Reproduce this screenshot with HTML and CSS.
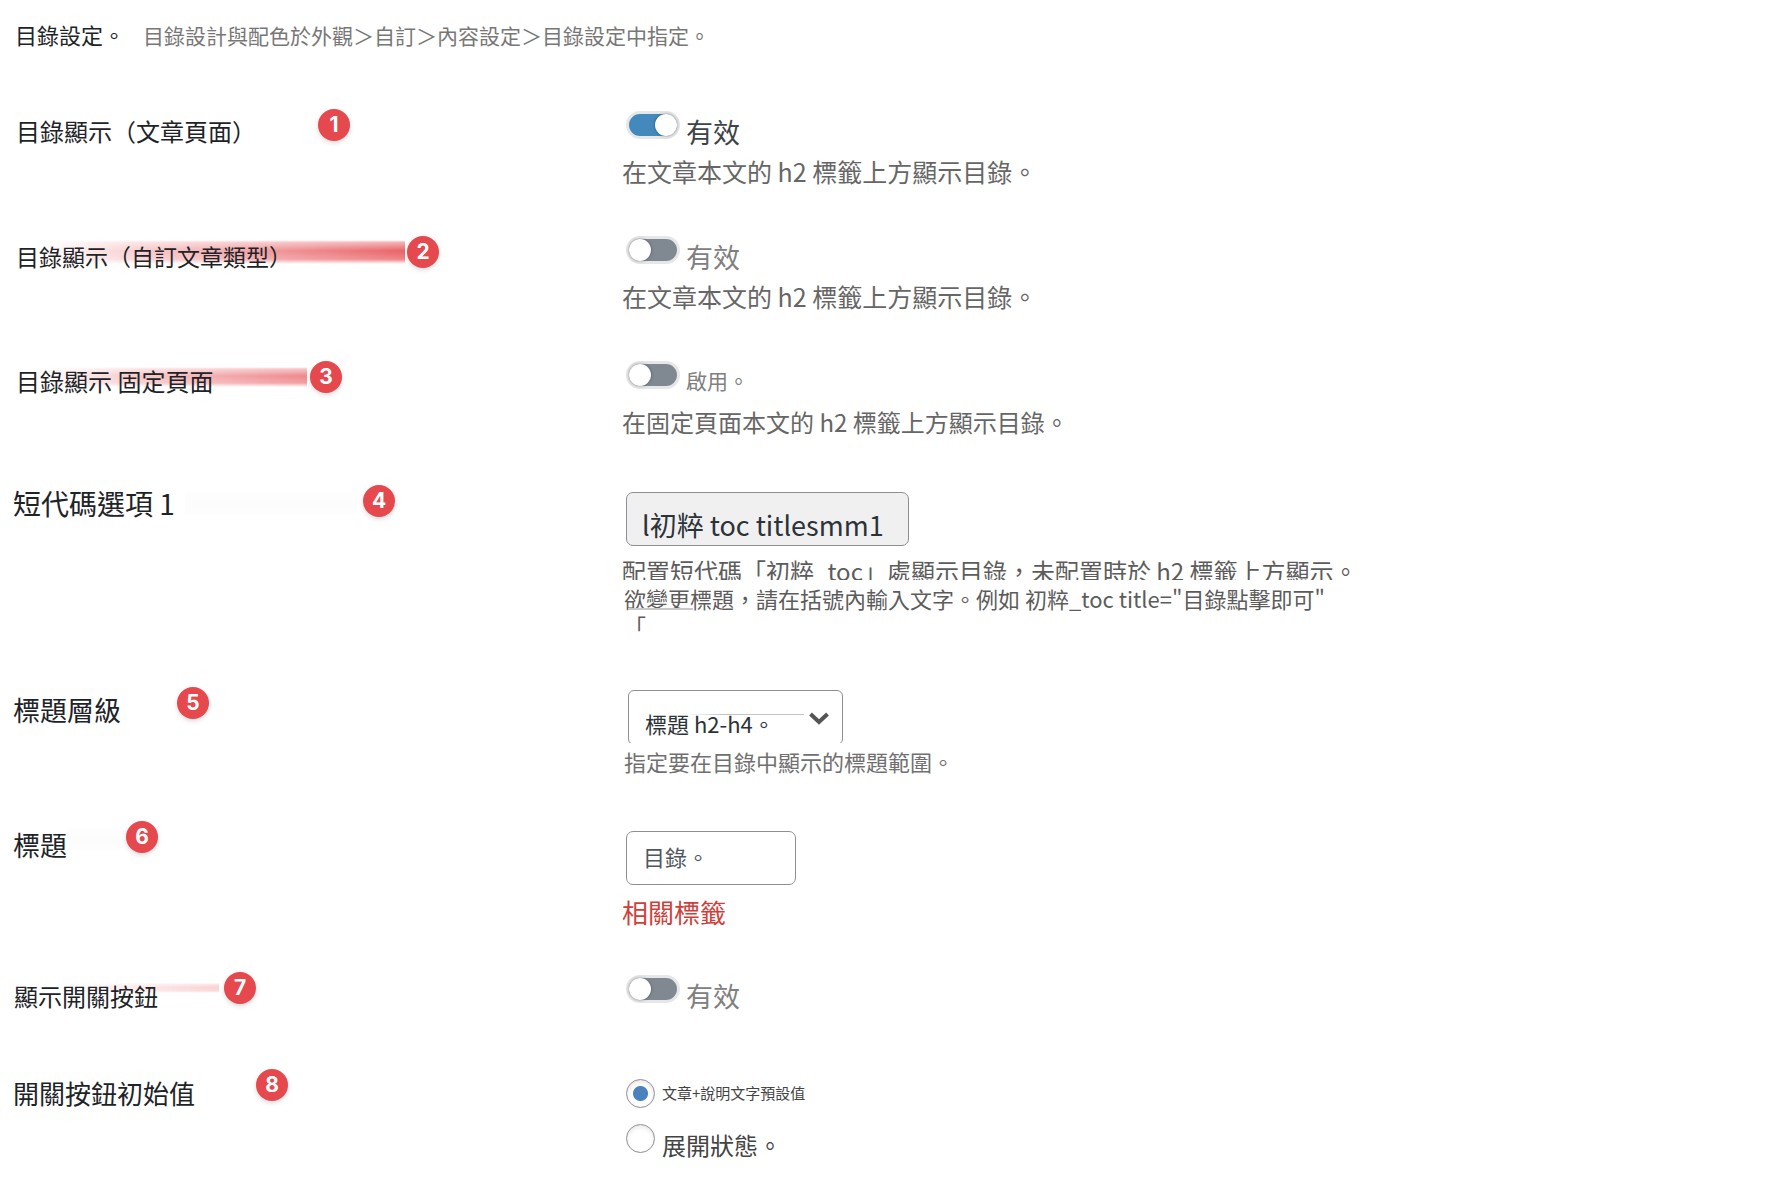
FILE: index.html
```
<!DOCTYPE html>
<html lang="zh-Hant">
<head>
  <meta charset="UTF-8">
  <meta name="viewport" content="width=device-width, initial-scale=1.0">
  <title>目錄設定</title>
  <link rel="stylesheet" href="styles.css">
</head>
<body>

  <!-- Header -->
  <header class="header">
    <h1>目錄設定。</h1>
    <p>目錄設計與配色於外觀＞自訂＞內容設定＞目錄設定中指定。</p>
  </header>

  <form class="settings">

    <div class="row">
      <div class="label"><label for="toc-post">目錄顯示（文章頁面）</label></div>
      <span class="pin pin-1">1</span>
      <div class="field">
        <label class="toggle on"><input type="checkbox" id="toc-post" checked> <span>有效</span></label>
        <p class="desc">在文章本文的 h2 標籤上方顯示目錄。</p>
      </div>
    </div>

    <div class="row">
      <span class="streak streak-2"></span>
      <div class="label custom"><label for="toc-custom">目錄顯示（自訂文章類型）</label></div>
      <span class="pin pin-2">2</span>
      <div class="field">
        <label class="toggle"><input type="checkbox" id="toc-custom"> <span>有效</span></label>
        <p class="desc">在文章本文的 h2 標籤上方顯示目錄。</p>
      </div>
    </div>

    <div class="row row-page">
      <span class="streak streak-3"></span>
      <div class="label"><label for="toc-page">目錄顯示 固定頁面</label></div>
      <span class="pin pin-3">3</span>
      <div class="field">
        <label class="toggle small"><input type="checkbox" id="toc-page"> <span>啟用。</span></label>
        <p class="desc page-desc">在固定頁面本文的 h2 標籤上方顯示目錄。</p>
      </div>
    </div>

    <div class="row row-code">
      <span class="streak streak-4"></span>
      <div class="label"><label for="shortcode">短代碼選項 1</label></div>
      <span class="pin pin-4">4</span>
      <div class="field">
        <input class="box code" type="text" id="shortcode" value="l初粹 toc titlesmm1" readonly>
        <p class="desc cut">配置短代碼「初粹_toc」處顯示目錄，未配置時於 h2 標籤上方顯示。</p>
        <p class="desc note">欲變更標題，請在括號內輸入文字。例如 初粹_toc title="目錄點擊即可"<br>「</p>
      </div>
    </div>

    <div class="row row-level">
      <div class="label"><label for="level">標題層級</label></div>
      <span class="pin pin-5">5</span>
      <div class="field">
        <div class="select">
          <select id="level">
            <option>標題 h2-h4。</option>
          </select>
          <svg viewBox="0 0 20 13" width="20" height="13"><path d="M1.5 2 L10 10 L18.5 2" fill="none" stroke="#555" stroke-width="4"/></svg>
        </div>
        <p class="desc level-desc">指定要在目錄中顯示的標題範圍。</p>
      </div>
    </div>

    <div class="row row-title">
      <span class="streak streak-6"></span>
      <div class="label"><label for="title">標題</label></div>
      <span class="pin pin-6">6</span>
      <div class="field">
        <input class="box title" type="text" id="title" value="目錄。">
        <p class="related">相關標籤</p>
      </div>
    </div>

    <div class="row row-switch">
      <span class="streak streak-7"></span>
      <div class="label"><label for="switch">顯示開關按鈕</label></div>
      <span class="pin pin-7">7</span>
      <div class="field">
        <label class="toggle"><input type="checkbox" id="switch"> <span>有效</span></label>
      </div>
    </div>

    <div class="row row-initial">
      <div class="label" id="initial">開關按鈕初始值</div>
      <span class="pin pin-8">8</span>
      <div class="field" role="radiogroup" aria-labelledby="initial">
        <label class="radio tiny"><input type="radio" name="initial" checked> <span>文章+說明文字預設值</span></label>
        <label class="radio"><input type="radio" name="initial"> <span>展開狀態。</span></label>
      </div>
    </div>

  </form>

</body>
</html>
```

FILE: styles.css
```
* {
  box-sizing: border-box;
}

body {
  margin: 0;
  padding: 18px 13px 0;
  font-family: "Noto Sans CJK TC", sans-serif;
  font-size: 24px;
  line-height: 36px;
  color: #1d2327;
  background: #fff;
}

h1,
p {
  margin: 0;
}

input,
select {
  margin: 0;
  font-family: inherit;
}

/* Header */
.header {
  display: flex;
  gap: 18px;
  padding-left: 2px;
  margin-bottom: 60px;
  line-height: 32px;
}

.header h1 {
  font-size: 22px;
  font-weight: 400;
}

.header p {
  padding-top: 1px;
  font-size: 21px;
  color: #777;
}

/* Rows */
.row {
  position: relative;
  display: grid;
  grid-template-columns: 609px 1fr;
  margin-bottom: 46px;
}

.label {
  position: relative;
  grid-column: 1;
  padding: 2px 0 0 3px;
}

.label.custom {
  font-size: 23px;
}

.field {
  grid-column: 2;
}

.desc {
  margin-top: 3px;
  font-size: 25px;
  color: #666;
}

.desc.page-desc {
  margin-top: 4px;
  font-size: 24px;
}

.row-code .label {
  padding: 0;
  font-size: 28px;
}

.row-title .label,
.row-initial .label {
  padding: 3px 0 0;
}

.row-code .field,
.row-title .field,
.row-initial .field {
  padding-top: 7px;
}

.row-level .label {
  padding: 2px 0 0;
  font-size: 27px;
}

.row-title .label {
  font-size: 27px;
}

.row-switch .label {
  padding: 3px 0 0 1px;
}

.row-initial .label {
  font-size: 26px;
}

/* the first two rows are a little taller */
.row:not([class*="row-"]) {
  margin-bottom: 47px;
}

.row-page {
  margin-bottom: 45px;
}

.row-code {
  margin-bottom: 51px;
}

.row-level {
  margin-bottom: 49px;
}

.row-title {
  margin-bottom: 45px;
}

.row-switch {
  margin-bottom: 58px;
}

.row-initial {
  margin-bottom: 0;
}

/* Number pins */
.pin {
  position: absolute;
  width: 32px;
  height: 32px;
  border-radius: 50%;
  background: #e5484d;
  box-shadow: 0 2px 5px rgba(0, 0, 0, 0.15);
  color: #fff;
  font-family: Inter, sans-serif;
  font-size: 21px;
  font-weight: 700;
  line-height: 31px;
  text-align: center;
}

.pin-1 { left: 305px; top: -2px; }
.pin-2 { left: 394px; top: 0; }
.pin-3 { left: 297px; top: 0; }
.pin-4 { left: 350px; top: 0; }
.pin-5 { left: 164px; top: -3px; }
.pin-6 { left: 113px; top: -3px; }
.pin-7 { left: 211px; top: -3px; }
.pin-8 { left: 243px; top: -3px; }

/* Fading lines that lead to the pins */
.streak {
  position: absolute;
  -webkit-mask-image: linear-gradient(transparent, rgba(0, 0, 0, 0.5) 10%, #000 45%, rgba(0, 0, 0, 0.8) 80%, transparent);
  mask-image: linear-gradient(transparent, rgba(0, 0, 0, 0.5) 10%, #000 45%, rgba(0, 0, 0, 0.8) 80%, transparent);
}

.streak-2 {
  left: 27px;
  top: 4px;
  width: 365px;
  height: 24px;
  background: linear-gradient(to right, transparent, rgba(229, 72, 77, 0.3) 30%, rgba(229, 72, 77, 0.85));
}

.streak-3 {
  left: 27px;
  top: 6px;
  width: 267px;
  height: 20px;
  background: linear-gradient(to right, transparent, rgba(229, 72, 77, 0.25) 30%, rgba(229, 72, 77, 0.65));
}

.streak-4 {
  left: 172px;
  top: 5px;
  width: 172px;
  height: 26px;
  background: rgba(0, 0, 0, 0.01);
}

.streak-6 {
  left: 54px;
  top: 2px;
  width: 53px;
  height: 26px;
  background: rgba(0, 0, 0, 0.01);
}

.streak-7 {
  left: 47px;
  top: 8px;
  width: 159px;
  height: 10px;
  background: linear-gradient(to right, transparent, rgba(229, 72, 77, 0.25));
}

/* Toggle */
.toggle {
  display: flex;
  align-items: flex-start;
  gap: 6px;
  padding-left: 4px;
  font-size: 27px;
  color: #808080;
}

.toggle.on {
  color: #3c434a;
}

.toggle span {
  padding-top: 3px;
}

.toggle.small span {
  padding: 1px 0 2px;
  font-size: 21px;
}

.toggle input {
  appearance: none;
  display: flex;
  width: 54px;
  height: 28px;
  border: 3px solid #e5e7e9;
  border-radius: 14px;
  background: #808891;
}

.toggle input::before {
  content: "";
  width: 22px;
  height: 22px;
  border-radius: 50%;
  background: #fff;
  box-shadow: 0 0 3px rgba(0, 0, 0, 0.4);
}

.toggle input:checked {
  justify-content: flex-end;
  background: #4389bb;
}

/* Text boxes */
.box {
  display: block;
  height: 54px;
  margin-left: 4px;
  border: 1px solid #8c8f94;
  border-radius: 7px;
  background: #fff;
}

.box.code {
  width: 283px;
  padding: 10px 15px 0;
  background: #f0f0f0;
  font-size: 27px;
  color: #2c3338;
}

.box.title {
  width: 170px;
  padding: 0 16px 4px;
  font-size: 22px;
  color: #50575e;
}

.desc.cut {
  height: 24px;
  margin-top: 10px;
  overflow: hidden;
  font-size: 24px;
  line-height: 30px;
  color: #5c5c5c;
}

.desc.note {
  position: relative;
  margin-top: 5px;
  padding-left: 2px;
  font-size: 22px;
  line-height: 27px;
  color: #5c5c5c;
}

.desc.note::after {
  content: "";
  position: absolute;
  left: 6px;
  top: 23px;
  width: 65px;
  height: 4px;
  border-top: 2px solid #c8c8c8;
  background: #fff;
}

/* Select */
.select {
  position: relative;
  width: 215px;
  height: 53px;
  margin-left: 6px;
  overflow: hidden;
}

.select select {
  appearance: none;
  width: 100%;
  height: 55px;
  padding: 10px 40px 0 16px;
  border: 1px solid #8c8f94;
  border-radius: 6px;
  background: #fff;
  font-size: 22px;
  color: #2c3338;
}

.select svg {
  position: absolute;
  right: 14px;
  top: 22px;
}

.select::after {
  content: "";
  position: absolute;
  right: 39px;
  top: 24px;
  width: 116px;
  height: 1px;
  background: linear-gradient(to right, transparent, #c4c4c4 30%);
}

.desc.level-desc {
  margin-top: 4px;
  padding-left: 2px;
  font-size: 22px;
  line-height: 28px;
  color: #707070;
}

.related {
  margin-top: 9px;
  font-size: 26px;
  color: #d0403b;
}

/* Radio buttons */
.radio {
  display: flex;
  align-items: flex-start;
  gap: 7px;
  height: 45px;
  padding-left: 4px;
  color: #444;
}

.radio span {
  padding-top: 3px;
}

.radio.tiny span {
  padding-top: 0;
  font-size: 15px;
  line-height: 28px;
}

.radio input {
  appearance: none;
  width: 29px;
  height: 29px;
  border: 1px solid #8c8f94;
  border-radius: 50%;
  background: #fff;
  box-shadow: inset 0 2px 4px rgba(0, 0, 0, 0.1);
}

.radio input:checked {
  background: radial-gradient(circle, #4a82c0 7px, transparent 8px);
}
```
